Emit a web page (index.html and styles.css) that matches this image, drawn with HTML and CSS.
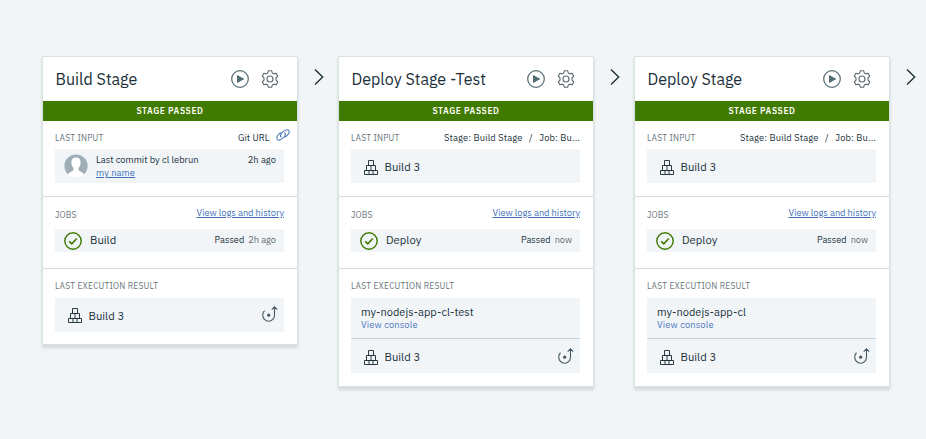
FILE: index.html
```html
<!DOCTYPE html>
<html lang="en">
<head>
<meta charset="utf-8">
<title>Delivery pipeline</title>
<link rel="stylesheet" href="styles.css">
</head>
<body>
<svg class="sprite" aria-hidden="true">
  <symbol id="play" viewBox="0 0 18 18"><circle cx="9" cy="9" r="8.3" fill="none" stroke="currentColor" stroke-width="1.2"/><path d="M6 5v8l7.5-4z" fill="currentColor"/></symbol>
  <symbol id="gear" viewBox="0 0 18 18"><g fill="none" stroke="currentColor" stroke-width="1.1" stroke-linejoin="round"><path d="M7.300.8h3.400l.6 2.200 1.500.9 2.400-.7 1.500 2.800-1.700 1.800v2.400l1.700 1.800-1.500 2.800-2.400-.7-1.500.9-.6 2.200H7.300l-.6-2.200-1.500-.9-2.400.7L1.300 12 3 10.200V7.800L1.300 6l1.500-2.800 2.400.7 1.500-.9z"/><circle cx="9" cy="9" r="3"/></g></symbol>
  <symbol id="chevron" viewBox="0 0 10 18"><path d="M1 1.500 8.700 9 1 16.500" fill="none" stroke="currentColor" stroke-width="1.400"/></symbol>
  <symbol id="blocks" viewBox="0 0 14 15"><path d="M4.500.5h5v5h-5zM2.500 5.500h9v5h-9zM7 5.500v5M.5 10.500h13v4H.5zM5 10.500v4M9 10.500v4" fill="none" stroke="currentColor" stroke-width=".95"/></symbol>
  <symbol id="check" viewBox="0 0 18 18"><circle cx="9" cy="9" r="8.200" fill="none" stroke="currentColor" stroke-width="1.400"/><path d="m5.200 9.300 2.600 2.500 5-5.300" fill="none" stroke="currentColor" stroke-width="1.600"/></symbol>
  <symbol id="rollback" viewBox="0 0 16 16"><path d="M2.800 5.100C1.300 5.300.8 7 .8 9.300c0 3.300 2.400 5.900 5.800 5.900s5.900-2.600 5.900-5.900V1M9.700 3.600l2.800-2.800 2.800 2.800" fill="none" stroke="currentColor" stroke-width="1.100"/><circle cx="6.700" cy="9.200" r="1.600" fill="currentColor"/></symbol>
  <symbol id="link" viewBox="0 0 14 12"><g fill="none" stroke="currentColor" stroke-width="1.050" stroke-linecap="round"><path d="M5.100 8.100C3.600 6.500 4.900 4.700 6.300 3.300 8.300 1.300 10.800.1 12.500 1.200c1.500 1.300.3 3.900-1.500 5.500-.8.700-1.700 1.200-2.500 1.400"/><path d="M8.800 3.700c1.300 1.500.3 3.200-1.200 4.800C5.600 10.500 3.100 11.800 1.500 10.600 0 9.300 1 7 2.700 5.300c.6-.6 1.300-1.100 2-1.400"/></g></symbol>
  <symbol id="avatar" viewBox="0 0 24 24"><circle cx="12" cy="12" r="11.600" fill="#9fadb5"/><path d="M12 3.500c-3.100 0-4.800 2.300-4.600 5.200.1 2.300.9 4.200 2 5.300v2.300c-.8 1.300-4.300 1.600-5.700 4.300a12 12 0 0 0 16.600 0c-1.400-2.700-4.900-3-5.700-4.300V14c1.100-1.100 1.900-3 2-5.300.2-2.900-1.500-5.200-4.600-5.200z" fill="#fff"/></symbol>
</svg>
<main class="pipeline">
  <article class="stage">
    <header class="head"><h2 class="title">Build Stage</h2><svg class="i-head"><use href="#play"/></svg><svg class="i-head gear"><use href="#gear"/></svg></header>
    <div class="status">STAGE PASSED</div>
    <section class="input">
      <div class="row"><span class="label">LAST INPUT</span><span class="source git">Git URL</span><svg class="i-link"><use href="#link"/></svg></div>
      <div class="box commit"><svg class="i-avatar"><use href="#avatar"/></svg><div class="message"><div>Last commit by cl lebrun</div><a class="name">my name</a></div><span class="ago">2h ago</span></div>
    </section>
    <section class="jobs">
      <div class="row"><span class="label small">JOBS</span><a class="logs">View logs and history</a></div>
      <div class="box job"><svg class="i-check"><use href="#check"/></svg><span class="item">Build</span><span class="passed">Passed</span><span class="when">2h ago</span></div>
    </section>
    <section class="result">
      <div class="label">LAST EXECUTION RESULT</div>
      <div class="box build shifted"><svg class="i-blocks"><use href="#blocks"/></svg><span class="item">Build 3</span><svg class="i-rollback"><use href="#rollback"/></svg></div>
    </section>
  </article>
  <svg class="i-chevron"><use href="#chevron"/></svg>
  <article class="stage">
    <header class="head"><h2 class="title">Deploy Stage -Test</h2><svg class="i-head"><use href="#play"/></svg><svg class="i-head gear"><use href="#gear"/></svg></header>
    <div class="status">STAGE PASSED</div>
    <section class="input">
      <div class="row"><span class="label">LAST INPUT</span><span class="source">Stage: Build Stage<span class="slash">/</span>Job: Bu...</span></div>
      <div class="box build"><svg class="i-blocks"><use href="#blocks"/></svg><span class="item">Build 3</span></div>
    </section>
    <section class="jobs">
      <div class="row"><span class="label small">JOBS</span><a class="logs">View logs and history</a></div>
      <div class="box job"><svg class="i-check"><use href="#check"/></svg><span class="item">Deploy</span><span class="passed">Passed</span><span class="when">now</span></div>
    </section>
    <section class="result deployed">
      <div class="label">LAST EXECUTION RESULT</div>
      <div class="box app"><div class="app-name">my-nodejs-app-cl-test</div><a class="console">View console</a></div>
      <div class="box build"><svg class="i-blocks"><use href="#blocks"/></svg><span class="item">Build 3</span><svg class="i-rollback"><use href="#rollback"/></svg></div>
    </section>
  </article>
  <svg class="i-chevron"><use href="#chevron"/></svg>
  <article class="stage">
    <header class="head"><h2 class="title">Deploy Stage</h2><svg class="i-head"><use href="#play"/></svg><svg class="i-head gear"><use href="#gear"/></svg></header>
    <div class="status">STAGE PASSED</div>
    <section class="input">
      <div class="row"><span class="label">LAST INPUT</span><span class="source">Stage: Build Stage<span class="slash">/</span>Job: Bu...</span></div>
      <div class="box build"><svg class="i-blocks"><use href="#blocks"/></svg><span class="item">Build 3</span></div>
    </section>
    <section class="jobs">
      <div class="row"><span class="label small">JOBS</span><a class="logs">View logs and history</a></div>
      <div class="box job"><svg class="i-check"><use href="#check"/></svg><span class="item">Deploy</span><span class="passed">Passed</span><span class="when">now</span></div>
    </section>
    <section class="result deployed">
      <div class="label">LAST EXECUTION RESULT</div>
      <div class="box app"><div class="app-name">my-nodejs-app-cl</div><a class="console">View console</a></div>
      <div class="box build"><svg class="i-blocks"><use href="#blocks"/></svg><span class="item">Build 3</span><svg class="i-rollback"><use href="#rollback"/></svg></div>
    </section>
  </article>
  <svg class="i-chevron"><use href="#chevron"/></svg>
</main>
</body>
</html>
```

FILE: styles.css
```css
* { box-sizing: border-box; }
body { margin: 0; height: 439px; overflow: hidden; background: #f1f5f8; color: #20303a; font-family: "IBM Plex Sans", Roboto, sans-serif; }
svg { display: block; flex: none; }
.sprite { display: none; }
.pipeline { display: flex; align-items: flex-start; padding: 56px 0 0 42px; }
.stage { width: 256px; flex: none; background: #fff; border: 1px solid #dbe1e3; box-shadow: 0 3px 3px rgba(60, 75, 80, .17); }
.head { height: 44px; display: flex; align-items: center; padding: 0 18.500px 0 12.500px; }
.title { margin: 0 auto 0 0; font-size: 16px; font-weight: 400; line-height: 20px; letter-spacing: .02px; }
.i-head { width: 18px; height: 18px; color: #526a74; }
.gear { margin-left: 11.500px; color: #5b6870; }
.status { height: 20px; background: #417a00; color: #fff; text-align: center; font-size: 8.500px; font-weight: 600; line-height: 20px; letter-spacing: .6px; }
.input, .jobs, .result { padding: 0 13px 0 12px; }
.input { height: 76px; border-bottom: 1px solid #d8dcde; }
.jobs { height: 72px; border-bottom: 1px solid #d8dcde; }
.result { padding-top: 11px; padding-bottom: 12px; }
.deployed { padding-bottom: 13px; }
.row { display: flex; justify-content: space-between; }
.input .row { height: 28px; padding-top: 11px; }
.jobs .row { height: 32px; padding-top: 10px; }
.label { font-size: 8.500px; line-height: 12px; letter-spacing: .18px; color: #68757b; white-space: nowrap; }
.small { padding-top: 2px; }
.result .label { height: 18px; }
.source { font-size: 9.300px; line-height: 12px; letter-spacing: .15px; white-space: nowrap; }
.git { margin-left: auto; letter-spacing: .05px; }
.slash { margin: 0 6.500px; }
.i-link { width: 14px; height: 12px; margin: -3px -5.500px 0 6px; color: #4675bb; }
.box { background: #f1f5f8; display: flex; }
.commit { height: 34px; padding: 5px 8px 0 9px; font-size: 9.300px; line-height: 12px; letter-spacing: .03px; }
.i-avatar { width: 24px; height: 24px; }
.message { margin-left: 8px; flex: 1; white-space: nowrap; }
.name { display: block; line-height: 14px; letter-spacing: .1px; }
.name, .logs { color: #3f70b9; text-decoration: underline; }
.logs { font-size: 9.300px; line-height: 12px; letter-spacing: -.04px; }
.job { height: 23px; align-items: center; padding: 0 8px 0 9px; }
.i-check { width: 18px; height: 18px; margin-right: 8px; color: #417a00; }
.item { font-size: 11.300px; line-height: 16px; letter-spacing: 0; margin-right: auto; }
.job .item, .passed, .when { margin-top: -1px; }
.passed, .when { font-size: 9.200px; line-height: 14px; letter-spacing: 0; }
.when { margin-left: 4px; color: #5f6b72; }
.build { height: 34px; align-items: center; padding: 2px 6px 0 13px; }
.shifted { padding-top: 1px; }
.i-blocks { width: 14px; height: 15px; margin-right: 6.500px; }
.i-rollback { width: 16px; height: 16px; margin-top: -3px; color: #4b5b65; }
.app { height: 41px; flex-direction: column; padding: 7px 10px 0; border-bottom: 1px solid #c8d2d8; }
.app-name { font-size: 11px; line-height: 14px; letter-spacing: .05px; }
.console { font-size: 9.300px; line-height: 12px; letter-spacing: .15px; color: #4f79bd; }
.i-chevron { width: 10px; height: 18px; margin: 12px 14px 0 16px; color: #20303a; }
```
